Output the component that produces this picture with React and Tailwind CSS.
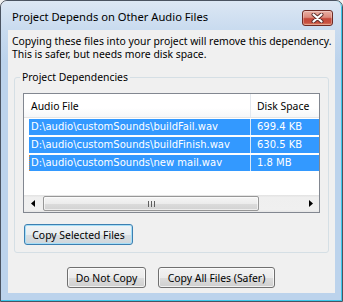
export default function App() {
  const rows = [
    ["D:\\audio\\customSounds\\buildFail.wav", "699.4 KB"],
    ["D:\\audio\\customSounds\\buildFinish.wav", "630.5 KB"],
    ["D:\\audio\\customSounds\\new mail.wav", "1.8 MB"],
  ];
  return (
    <div className="w-[343px] h-[302px] bg-[#f0f0f0]">
      <div className="w-full h-full rounded-t-[7px] border border-[#4a5361] overflow-hidden">
        <div className="w-full h-full flex flex-col rounded-t-[6px] border-r border-b border-[#3cc8ea] bg-[linear-gradient(180deg,#dce7f4_0px,#c9dbef_28px,#bcd3ec_60px,#bcd3ec_100%)]">
          {/* Title bar */}
          <div className="h-[29px] shrink-0 flex items-start">
            <div className="ml-[11px] mt-[8px] text-[11.2px] leading-[15px] text-black font-['Noto_Sans',sans-serif] whitespace-nowrap">
              Project Depends on Other Audio Files
            </div>
            <div className="ml-auto mr-[8px] mt-[9px] w-[31px] h-[16px] rounded-[3px] border border-[#6e2a24] bg-[linear-gradient(180deg,#eab0a4_0%,#dc8a7c_45%,#c5493a_55%,#c75040_82%,#dc8666_100%)] shadow-[inset_0_0_0_1px_rgba(255,255,255,0.3)] flex items-center justify-center">
              <svg width="13" height="10" viewBox="0 0 13 10">
                <path d="M2.5 1.5 L10.5 8.5 M10.5 1.5 L2.5 8.5" stroke="#5a2b28" strokeWidth="4" strokeLinecap="round" fill="none" />
                <path d="M2.5 1.5 L10.5 8.5 M10.5 1.5 L2.5 8.5" stroke="#ffffff" strokeWidth="2.2" strokeLinecap="round" fill="none" />
              </svg>
            </div>
          </div>

          {/* Client area */}
          <div className="ml-[7px] mr-[6px] h-[263px] shrink-0 bg-[#f0f0f0] flex flex-col font-['Noto_Sans',sans-serif] text-[10.4px] text-black">
            <div className="pl-[4px] pt-[5px] leading-[13px] whitespace-nowrap">
              <div>Copying these files into your project will remove this dependency.</div>
              <div>This is safer, but needs more disk space.</div>
            </div>

            {/* Group box */}
            <div className="ml-[6px] mt-[16px] w-[315px] h-[176px] shrink-0 relative border border-[#d5dfe5] rounded-[3px] flex flex-col">
              <div className="absolute left-[5px] -top-[8px] px-[2px] bg-[#f0f0f0] leading-[14px] whitespace-nowrap">
                Project Dependencies
              </div>

              {/* List view */}
              <div className="ml-[8px] mt-[15px] w-[297px] h-[120px] shrink-0 border border-[#828790] bg-white flex flex-col overflow-hidden">
                {/* Header */}
                <div className="h-[24px] shrink-0 flex bg-[linear-gradient(180deg,#ffffff_0%,#ffffff_60%,#f6f7f8_100%)] border-b border-[#e5e5e5] pl-[5px]">
                  <div className="w-[221px] pl-[2px] flex items-center leading-[14px]">Audio File</div>
                  <div className="flex-1 border-l border-[#e3e8ee] pl-[6px] flex items-center leading-[14px]">Disk Space</div>
                </div>
                {/* Rows */}
                <div className="flex flex-col gap-[2px] mt-[1px] ml-[5px] font-['DejaVu_Sans',sans-serif] text-[10px] text-white">
                  {rows.map((r, i) => (
                    <div key={i} className="h-[16px] flex bg-[#3399ff] leading-[16px] whitespace-nowrap">
                      <div className={i === 2 ? "w-[221px] pl-[1px] border-l border-dotted border-[#d08a48] overflow-hidden" : "w-[221px] pl-[2px] overflow-hidden"}>{r[0]}</div>
                      <div className="flex-1 border-l border-[#d8e8f8] pl-[6px]">{r[1]}</div>
                    </div>
                  ))}
                </div>
                {/* Horizontal scrollbar */}
                <div className="mt-auto h-[17px] shrink-0 flex items-center bg-[linear-gradient(180deg,#e2e2e2_0%,#efefef_15%,#f0f0f0_85%,#e6e6e6_100%)]">
                  <div className="w-[17px] h-full flex items-center justify-center">
                    <svg width="4" height="7" viewBox="0 0 4 7"><path d="M4 0 L0 3.5 L4 7 Z" fill="#000" /></svg>
                  </div>
                  <div className="ml-[2px] w-[216px] h-[15px] rounded-[2px] border border-[#979797] bg-[linear-gradient(180deg,#f5f5f5_0%,#ececec_50%,#dcdcdc_51%,#d2d2d2_100%)] shadow-[inset_0_0_0_1px_rgba(255,255,255,0.6)] flex items-center justify-center gap-[2px]">
                    <div className="w-px h-[6px] bg-[#5e5e5e]" />
                    <div className="w-px h-[6px] bg-[#5e5e5e]" />
                    <div className="w-px h-[6px] bg-[#5e5e5e]" />
                  </div>
                  <div className="ml-auto w-[17px] h-full flex items-center justify-center">
                    <svg width="4" height="7" viewBox="0 0 4 7"><path d="M0 0 L4 3.5 L0 7 Z" fill="#000" /></svg>
                  </div>
                </div>
              </div>

              {/* Copy Selected Files button (focused) */}
              <div className="ml-[9px] mt-[11px] w-[109px] h-[21px] shrink-0 rounded-[3px] border border-[#3c7fb1] bg-[linear-gradient(180deg,#f0f4f7_0%,#e8edf0_50%,#d9dfe3_51%,#cfd6db_100%)] shadow-[inset_0_0_0_1px_#a6def7] flex items-center justify-center leading-[14px] whitespace-nowrap">
                Copy Selected Files
              </div>
            </div>

            {/* Bottom buttons */}
            <div className="ml-[59px] mt-[14px] flex gap-[12px]">
              <div className="w-[79px] h-[21px] rounded-[3px] border border-[#707070] bg-[linear-gradient(180deg,#f2f2f2_0%,#ebebeb_50%,#dddddd_51%,#cfcfcf_100%)] shadow-[inset_0_0_0_1px_rgba(255,255,255,0.7)] flex items-center justify-center leading-[14px] whitespace-nowrap">
                Do Not Copy
              </div>
              <div className="w-[117px] h-[21px] rounded-[3px] border border-[#707070] bg-[linear-gradient(180deg,#f2f2f2_0%,#ebebeb_50%,#dddddd_51%,#cfcfcf_100%)] shadow-[inset_0_0_0_1px_rgba(255,255,255,0.7)] flex items-center justify-center leading-[14px] whitespace-nowrap">
                Copy All Files (Safer)
              </div>
            </div>
          </div>
        </div>
      </div>
    </div>
  );
}
